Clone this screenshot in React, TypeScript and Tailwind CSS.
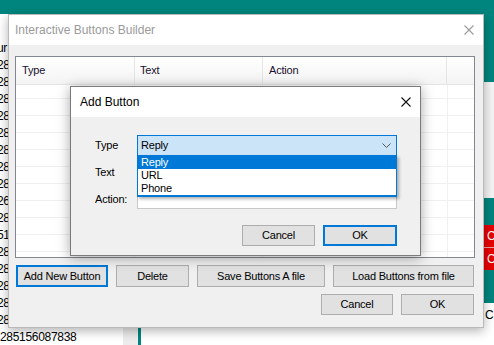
import React from "react";

const F = "font-['Liberation_Sans',Arial,sans-serif]";

function XIcon({ color, size = 10 }: { color: string; size?: number }) {
  return (
    <svg width={size} height={size} viewBox="0 0 10 10" className="block">
      <path d="M0.5 0.5 L9.5 9.5 M9.5 0.5 L0.5 9.5" stroke={color} strokeWidth="1.1" fill="none" />
    </svg>
  );
}

function Btn({ label, w, h = 22, focus = false }: { label: string; w: number; h?: number; focus?: boolean }) {
  return (
    <div
      style={{ width: w, height: h }}
      className={
        "flex items-center justify-center bg-[#e1e1e1] text-[11px] tracking-[-0.2px] text-black " +
        (focus ? "border-2 border-[#0078d7]" : "border border-[#adadad]")
      }
    >
      {label}
    </div>
  );
}

export default function App() {
  const leftRows = ["ur", "28", "28", "28", "28", "28", "28", "28", "28", "26", "28", "51", "28", "28", "28", "28", "28"];
  const gridLines = [98, 115, 132, 149, 166, 183, 200, 217, 234, 251];
  return (
    <div className={"relative w-[494px] h-[345px] overflow-hidden bg-white " + F}>
      {/* desktop / background app */}
      <div className="absolute left-0 top-0 w-full h-[14px] bg-[#00857e]" />
      <div className="absolute left-[-3px] top-[40px] flex flex-col text-[12px] leading-[17px] tracking-[-0.3px] text-black">
        {leftRows.map((r, i) => (
          <div key={i} className="h-[17px]">{r}</div>
        ))}
        <div className="h-[17px] ml-[3px]">285156087838</div>
      </div>
      <div className="absolute left-[123px] top-[328px] w-[15px] h-[17px] bg-[#ececec]" />
      <div className="absolute left-[138px] top-[328px] w-[3px] h-[17px] bg-[#00857e]" />
      <div className="absolute left-[484px] top-0 w-[10px] h-full flex flex-col text-[12px]">
        <div className="h-[82px] bg-[#00857e]" />
        <div className="h-[116px] bg-[#f4f4f4]" />
        <div className="h-[27px] bg-[#00857e]" />
        <div className="h-[22px] bg-[#e60000] text-white pl-[3px] leading-[22px]">C</div>
        <div className="h-[1px] bg-[#f0a0a0]" />
        <div className="h-[22px] bg-[#e60000] text-white pl-[3px] leading-[22px]">C</div>
        <div className="h-[33px] bg-[#00857e]" />
        <div className="pt-[3px] pl-[1px] text-black">Ca</div>
      </div>

      {/* main window */}
      <div className="absolute left-[8px] top-[14px] w-[476px] h-[314px] border border-[#b9b9b9] bg-[#f0f0f0] shadow-[0_3px_10px_rgba(0,0,0,0.3)] flex flex-col">
        <div className="h-[30px] bg-white flex items-center justify-between pl-[6px] pr-[9px]">
          <span className="text-[12px] text-[#9a9a9a]">Interactive Buttons Builder</span>
          <XIcon color="#9a9a9a" />
        </div>
        <div className="flex flex-col pl-[6px] pt-[11px]">
          {/* list view */}
          <div className="relative w-[460px] h-[202px] border border-[#828790] bg-white overflow-hidden">
            <div className="flex h-[28px] bg-gradient-to-b from-white to-[#f4f4f4] border-b border-[#e5e5e5] text-[11px] tracking-[-0.2px] text-[#1a1030]">
              <div className="w-[119px] pl-[6px] flex items-center border-r border-[#e5e5e5]">Type</div>
              <div className="w-[128px] pl-[5px] flex items-center border-r border-[#e5e5e5]">Text</div>
              <div className="w-[184px] pl-[6px] flex items-center border-r border-[#e5e5e5]">Action</div>
              <div className="flex-1" />
            </div>
            {gridLines.map((y) => (
              <div key={y} className="absolute left-0 w-full h-px bg-[#f0f0f0]" style={{ top: y - 57 }} />
            ))}
            <div className="absolute top-[28px] bottom-0 left-[118px] w-px bg-[#f0f0f0]" />
            <div className="absolute top-[28px] bottom-0 left-[246px] w-px bg-[#f0f0f0]" />
            <div className="absolute top-[28px] bottom-0 left-[431px] w-px bg-[#f0f0f0]" />
          </div>
          <div className="flex gap-[8px] mt-[7px] ml-[1px]">
            <Btn label="Add New Button" w={92} focus />
            <Btn label="Delete" w={73} />
            <Btn label="Save Buttons A file" w={128} />
            <Btn label="Load Buttons from file" w={141} />
          </div>
          <div className="flex justify-end gap-[8px] mt-[7px] pr-[9px]">
            <Btn label="Cancel" w={72} h={21} />
            <Btn label="OK" w={73} h={21} />
          </div>
        </div>
      </div>

      {/* Add Button dialog */}
      <div className="absolute left-[70px] top-[86px] w-[351px] h-[170px] border border-[#7a7a7a] bg-[#f0f0f0] shadow-[0_2px_12px_rgba(0,0,0,0.35)] flex flex-col">
        <div className="h-[30px] bg-white flex items-center justify-between pl-[9px] pr-[9px]">
          <span className="text-[12px] text-black">Add Button</span>
          <XIcon color="#111" />
        </div>
        <div className="flex flex-col pl-[24px] pt-[18px] text-[11px] tracking-[-0.2px] text-black">
          <div className="flex items-center h-[21px]">
            <div className="w-[42px]">Type</div>
            <div className="relative">
              <div className="w-[260px] h-[21px] bg-[#cce4f7] border border-[#0078d7] flex items-center justify-between pl-[3px] pr-[5px]">
                <span>Reply</span>
                <svg width="9" height="5" viewBox="0 0 9 5" className="block">
                  <path d="M0.5 0.5 L4.5 4.5 L8.5 0.5" stroke="#555" strokeWidth="1" fill="none" />
                </svg>
              </div>
              <div className="absolute left-0 top-[20px] w-[260px] z-10 bg-white border border-[#0078d7] border-b-2 shadow-[2px_2px_3px_rgba(0,0,0,0.3)] flex flex-col">
                <div className="h-[13px] leading-[13px] pl-[3px] bg-[#0078d7] text-white">Reply</div>
                <div className="h-[13px] leading-[13px] pl-[3px]">URL</div>
                <div className="h-[13px] leading-[13px] pl-[3px]">Phone</div>
              </div>
            </div>
          </div>
          <div className="flex items-center h-[21px] mt-[6px]">
            <div className="w-[42px]">Text</div>
            <div className="w-[260px] h-[19px] bg-white border border-[#c8c8c8]" />
          </div>
          <div className="flex items-center h-[21px] mt-[6px]">
            <div className="w-[42px]">Action:</div>
            <div className="w-[260px] h-[19px] bg-white border border-[#c8c8c8]" />
          </div>
          <div className="flex justify-end gap-[8px] mt-[15px] pr-[23px]">
            <Btn label="Cancel" w={73} h={21} />
            <Btn label="OK" w={74} h={21} focus />
          </div>
        </div>
      </div>
    </div>
  );
}
